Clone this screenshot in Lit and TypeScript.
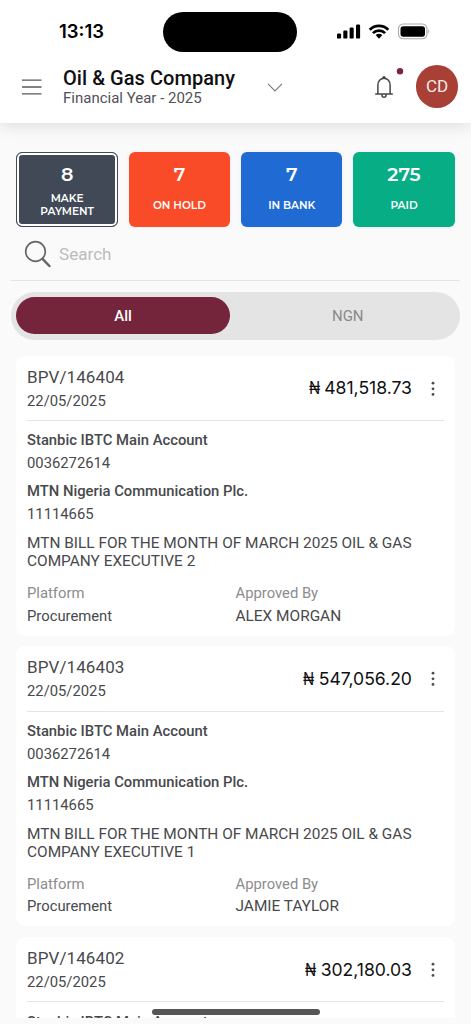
import { LitElement, html, css, nothing } from "lit";
import { customElement, property } from "lit/decorators.js";

interface Voucher {
  id: string;
  date: string;
  amount: string;
  details?: { bill: string; approver: string };
}

const vouchers: Voucher[] = [
  { id: "BPV/146404", date: "22/05/2025", amount: "481,518.73", details: { bill: "2", approver: "ALEX MORGAN" } },
  { id: "BPV/146403", date: "22/05/2025", amount: "547,056.20", details: { bill: "1", approver: "JAMIE TAYLOR" } },
  { id: "BPV/146402", date: "22/05/2025", amount: "302,180.03" },
];

@customElement("voucher-card")
class VoucherCard extends LitElement {
  @property({ attribute: false }) voucher!: Voucher;

  static styles = css`
    :host { display: block; height: 280px; flex: none; box-sizing: border-box; padding: 8px 11px 0; background: #fff; border-radius: 9px; color: #48494c; font-size: 14.8px; line-height: 22.7px; }
    .head { display: flex; justify-content: space-between; height: 56.5px; border-bottom: 1px solid #e4e4e5; }
    .id { font-size: 17px; line-height: 26px; letter-spacing: 0.1px; }
    .date { line-height: 22px; }
    .right { display: flex; height: 50px; align-items: center; }
    .amount { font-family: Inter, sans-serif; font-size: 17.6px; color: #101012; letter-spacing: -0.03px; white-space: pre; }
    .naira { display: inline-block; transform: scaleX(0.83); transform-origin: left; margin-right: -2.9px; }
    .dots { width: 4px; height: 16px; margin: 0 8.8px 0 19.3px; fill: #4c4d50; }
    .name { font-weight: 500; }
    .account { padding-top: 8.3px; }
    .payee { padding-top: 5.6px; }
    .desc { padding-top: 8.4px; line-height: 18px; white-space: nowrap; font-size: 15.42px; }
    .meta { padding-top: 11.9px; display: grid; grid-template-columns: 1fr 1fr; }
    .label { color: #8c8c8e; font-size: 14.8px; }
    .approver { font-size: 15.42px; }
  `;

  render() {
    const v = this.voucher;
    return html`
      <div class="head">
        <div>
          <div class="id">${v.id}</div>
          <div class="date">${v.date}</div>
        </div>
        <div class="right">
          <span class="amount"><span class="naira">₦</span> ${v.amount}</span>
          <svg class="dots" viewBox="0 0 4 16"><circle cx="2" cy="2.2" r="1.4" /><circle cx="2" cy="7.8" r="1.4" /><circle cx="2" cy="13.4" r="1.4" /></svg>
        </div>
      </div>
      <div class="account"><div class="name">Stanbic IBTC Main Account</div>${v.details ? html`<div>0036272614</div>` : nothing}</div>
      ${v.details
        ? html`
            <div class="payee"><div class="name">MTN Nigeria Communication Plc.</div><div>11114665</div></div>
            <div class="desc">MTN BILL FOR THE MONTH OF MARCH 2025 OIL &amp; GAS<br />COMPANY EXECUTIVE ${v.details.bill}</div>
            <div class="meta">
              <div><div class="label">Platform</div><div>Procurement</div></div>
              <div><div class="label">Approved By</div><div class="approver">${v.details.approver}</div></div>
            </div>`
        : nothing}`;
  }
}

const stats = [
  { n: "8", label: ["MAKE", "PAYMENT"], kind: "make" },
  { n: "7", label: ["ON HOLD"], kind: "hold" },
  { n: "7", label: ["IN BANK"], kind: "bank" },
  { n: "275", label: ["PAID"], kind: "paid" },
];

@customElement("app-root")
class AppRoot extends LitElement {
  static styles = css`
    :host { display: flex; flex-direction: column; height: 1024px; overflow: hidden; position: relative; background: #fafafa; font-family: Roboto, sans-serif; }
    .top { flex: none; height: 123px; background: #fff; box-shadow: 0 2px 16px rgba(0, 0, 0, 0.13); }
    .status { display: grid; grid-template-columns: 163px 134px 1fr; align-items: center; height: 38px; padding-top: 12px; }
    .clock { font: 600 18.5px/36px Inter, sans-serif; height: 38px; text-align: center; color: #000; letter-spacing: 0; }
    .island { height: 39.5px; border-radius: 20px; background: #000; }
    .signals { display: block; width: 96px; height: 20px; margin-left: 39px; margin-top: -1px; }
    .bar { display: flex; height: 73px; padding: 0 12.6px 0 22px; align-items: center; }
    .menu { width: 20px; height: 18px; }
    .titles { width: 173px; margin: 2px 0 0 21px; white-space: nowrap; }
    .company { font-weight: 500; font-size: 20px; line-height: 21px; color: #0f0f12; letter-spacing: 0.05px; }
    .year { font-size: 15px; line-height: 18px; color: #515256; }
    .chev { width: 16px; height: 9px; margin: 2px 0 0 31px; }
    .bell { width: 40px; height: 40px; margin: -5px 0 0 91px; flex: none; }
    .avatar { width: 42.6px; height: 42.6px; margin-left: auto; border-radius: 50%; background: #a84036; color: #f6eae9; font-size: 17px; line-height: 43px; text-align: center; }
    .stats { flex: none; display: grid; grid-template-columns: repeat(4, 101.5px); gap: 10.8px; padding: 29px 16px 0 16.4px; }
    .stat { box-sizing: border-box; height: 75px; border-radius: 6px; color: #fff; text-align: center; font-family: Montserrat, Inter, sans-serif; font-weight: 600; box-shadow: 0 0 4px rgba(0, 0, 0, 0.06); padding-top: 10px; display: flex; flex-direction: column; }
    .n { font-size: 19px; line-height: 25px; }
    .lab { height: 38px; display: flex; flex-direction: column; justify-content: center; font-size: 10.6px; line-height: 12.8px; }
    .make { background: #414957; border: 1.5px solid #414957; box-shadow: inset 0 0 0 2px #fff; padding-top: 9px; }
    .hold { background: #fa4b29; }
    .bank { background: #1f6bd3; }
    .paid { background: #07ad84; }
    .search { flex: none; box-sizing: border-box; height: 54px; margin: 0 11px; padding-left: 13px; border-bottom: 1px solid #e5e5e6; display: flex; align-items: center; gap: 8px; color: #bcbcbe; font-size: 17.1px; }
    .search svg { width: 27px; height: 28px; }
    .tabs { flex: none; display: grid; grid-template-columns: 1fr 1fr; box-sizing: border-box; height: 48px; margin: 10.5px 11px 16px; padding: 5px; border-radius: 24px; background: #e4e4e4; line-height: 38px; font-size: 15px; text-align: center; color: #89898b; }
    .tab { padding-left: 5px; }
    .on { height: 37.5px; padding: 0; margin-right: 5.5px; border-radius: 19px; background: #74243b; color: #fff; font-weight: 500; }
    .list { flex: none; height: 662.5px; overflow: hidden; display: flex; flex-direction: column; gap: 10.7px; padding: 0 16px; }
    .home { position: absolute; left: 152px; top: 1009.4px; width: 168px; height: 5.5px; border-radius: 3px; background: #555655; }
  `;

  render() {
    return html`
      <header class="top">
        <div class="status">
          <div class="clock">13:13</div>
          <div class="island"></div>
          <svg class="signals" viewBox="0 0 96 20">
            <g>
              <rect x="1" y="12.4" width="4.1" height="5.2" rx="1.2" /><rect x="7.3" y="9.6" width="4.1" height="8" rx="1.2" />
              <rect x="13.6" y="6.5" width="4.1" height="11.1" rx="1.2" /><rect x="20" y="3.5" width="4.1" height="14.1" rx="1.2" />
            </g>
            <g fill="none" stroke="#000" stroke-width="2.7">
              <path d="M33.7 8.7C38.8 3.5 47.2 3.5 52.3 8.7" /><path d="M36.9 12.1C40.2 8.7 45.8 8.7 49.1 12.1" />
            </g>
            <path d="M39.6 14.1Q43 11.4 46.4 14.1L43 17.8Z" />
            <rect x="62.5" y="3" width="28.5" height="14.8" rx="4.7" fill="none" stroke="#aaa" stroke-width="1.1" />
            <rect x="64.5" y="5.2" width="24.5" height="10.6" rx="2.8" />
            <path d="M92.3 8.2Q94.3 10.4 92.3 12.8Z" fill="#aaa" />
          </svg>
        </div>
        <div class="bar">
          <svg class="menu" viewBox="0 0 20 18" stroke="#58595c" stroke-width="1.3"><path d="M0 2.2H19.5M0 9H19.5M0 15.8H19.5" /></svg>
          <div class="titles"><div class="company">Oil &amp; Gas Company</div><div class="year">Financial Year - 2025</div></div>
          <svg class="chev" viewBox="0 0 16 9" fill="none" stroke="#77787a" stroke-width="1.1"><path d="M1 .8L8 7.9L15 .8" /></svg>
          <svg class="bell" viewBox="0 0 40 40">
            <g fill="none" stroke="#444548" stroke-width="1.5">
              <path d="M3.9 30V21.2C3.9 12 16.1 12 16.1 21.2V30" />
              <path d="M1.2 30H18.8" /><path d="M8 30V31.6Q8 33.3 10 33.3T12 31.6V30" />
            </g>
            <circle cx="10" cy="13.6" r="1.6" fill="#444548" /><circle cx="26" cy="7.2" r="3.2" fill="#7a263d" />
          </svg>
          <div class="avatar">CD</div>
        </div>
      </header>
      <section class="stats">
        ${stats.map((s) => html`<div class="stat ${s.kind}"><div class="n">${s.n}</div><div class="lab">${s.label.map((l) => html`<span>${l}</span>`)}</div></div>`)}
      </section>
      <div class="search">
        <svg viewBox="0 0 27 28" fill="none" stroke="#66676a"><circle cx="11.5" cy="11.5" r="9.8" stroke-width="1.7" /><path d="M18.5 18.9L25.4 26" stroke-width="2.5" stroke-linecap="round" /></svg>
        <span>Search</span>
      </div>
      <nav class="tabs"><div class="tab on">All</div><div class="tab">NGN</div></nav>
      <main class="list">${vouchers.map((v) => html`<voucher-card .voucher=${v}></voucher-card>`)}</main>
      <div class="home"></div>`;
  }
}
